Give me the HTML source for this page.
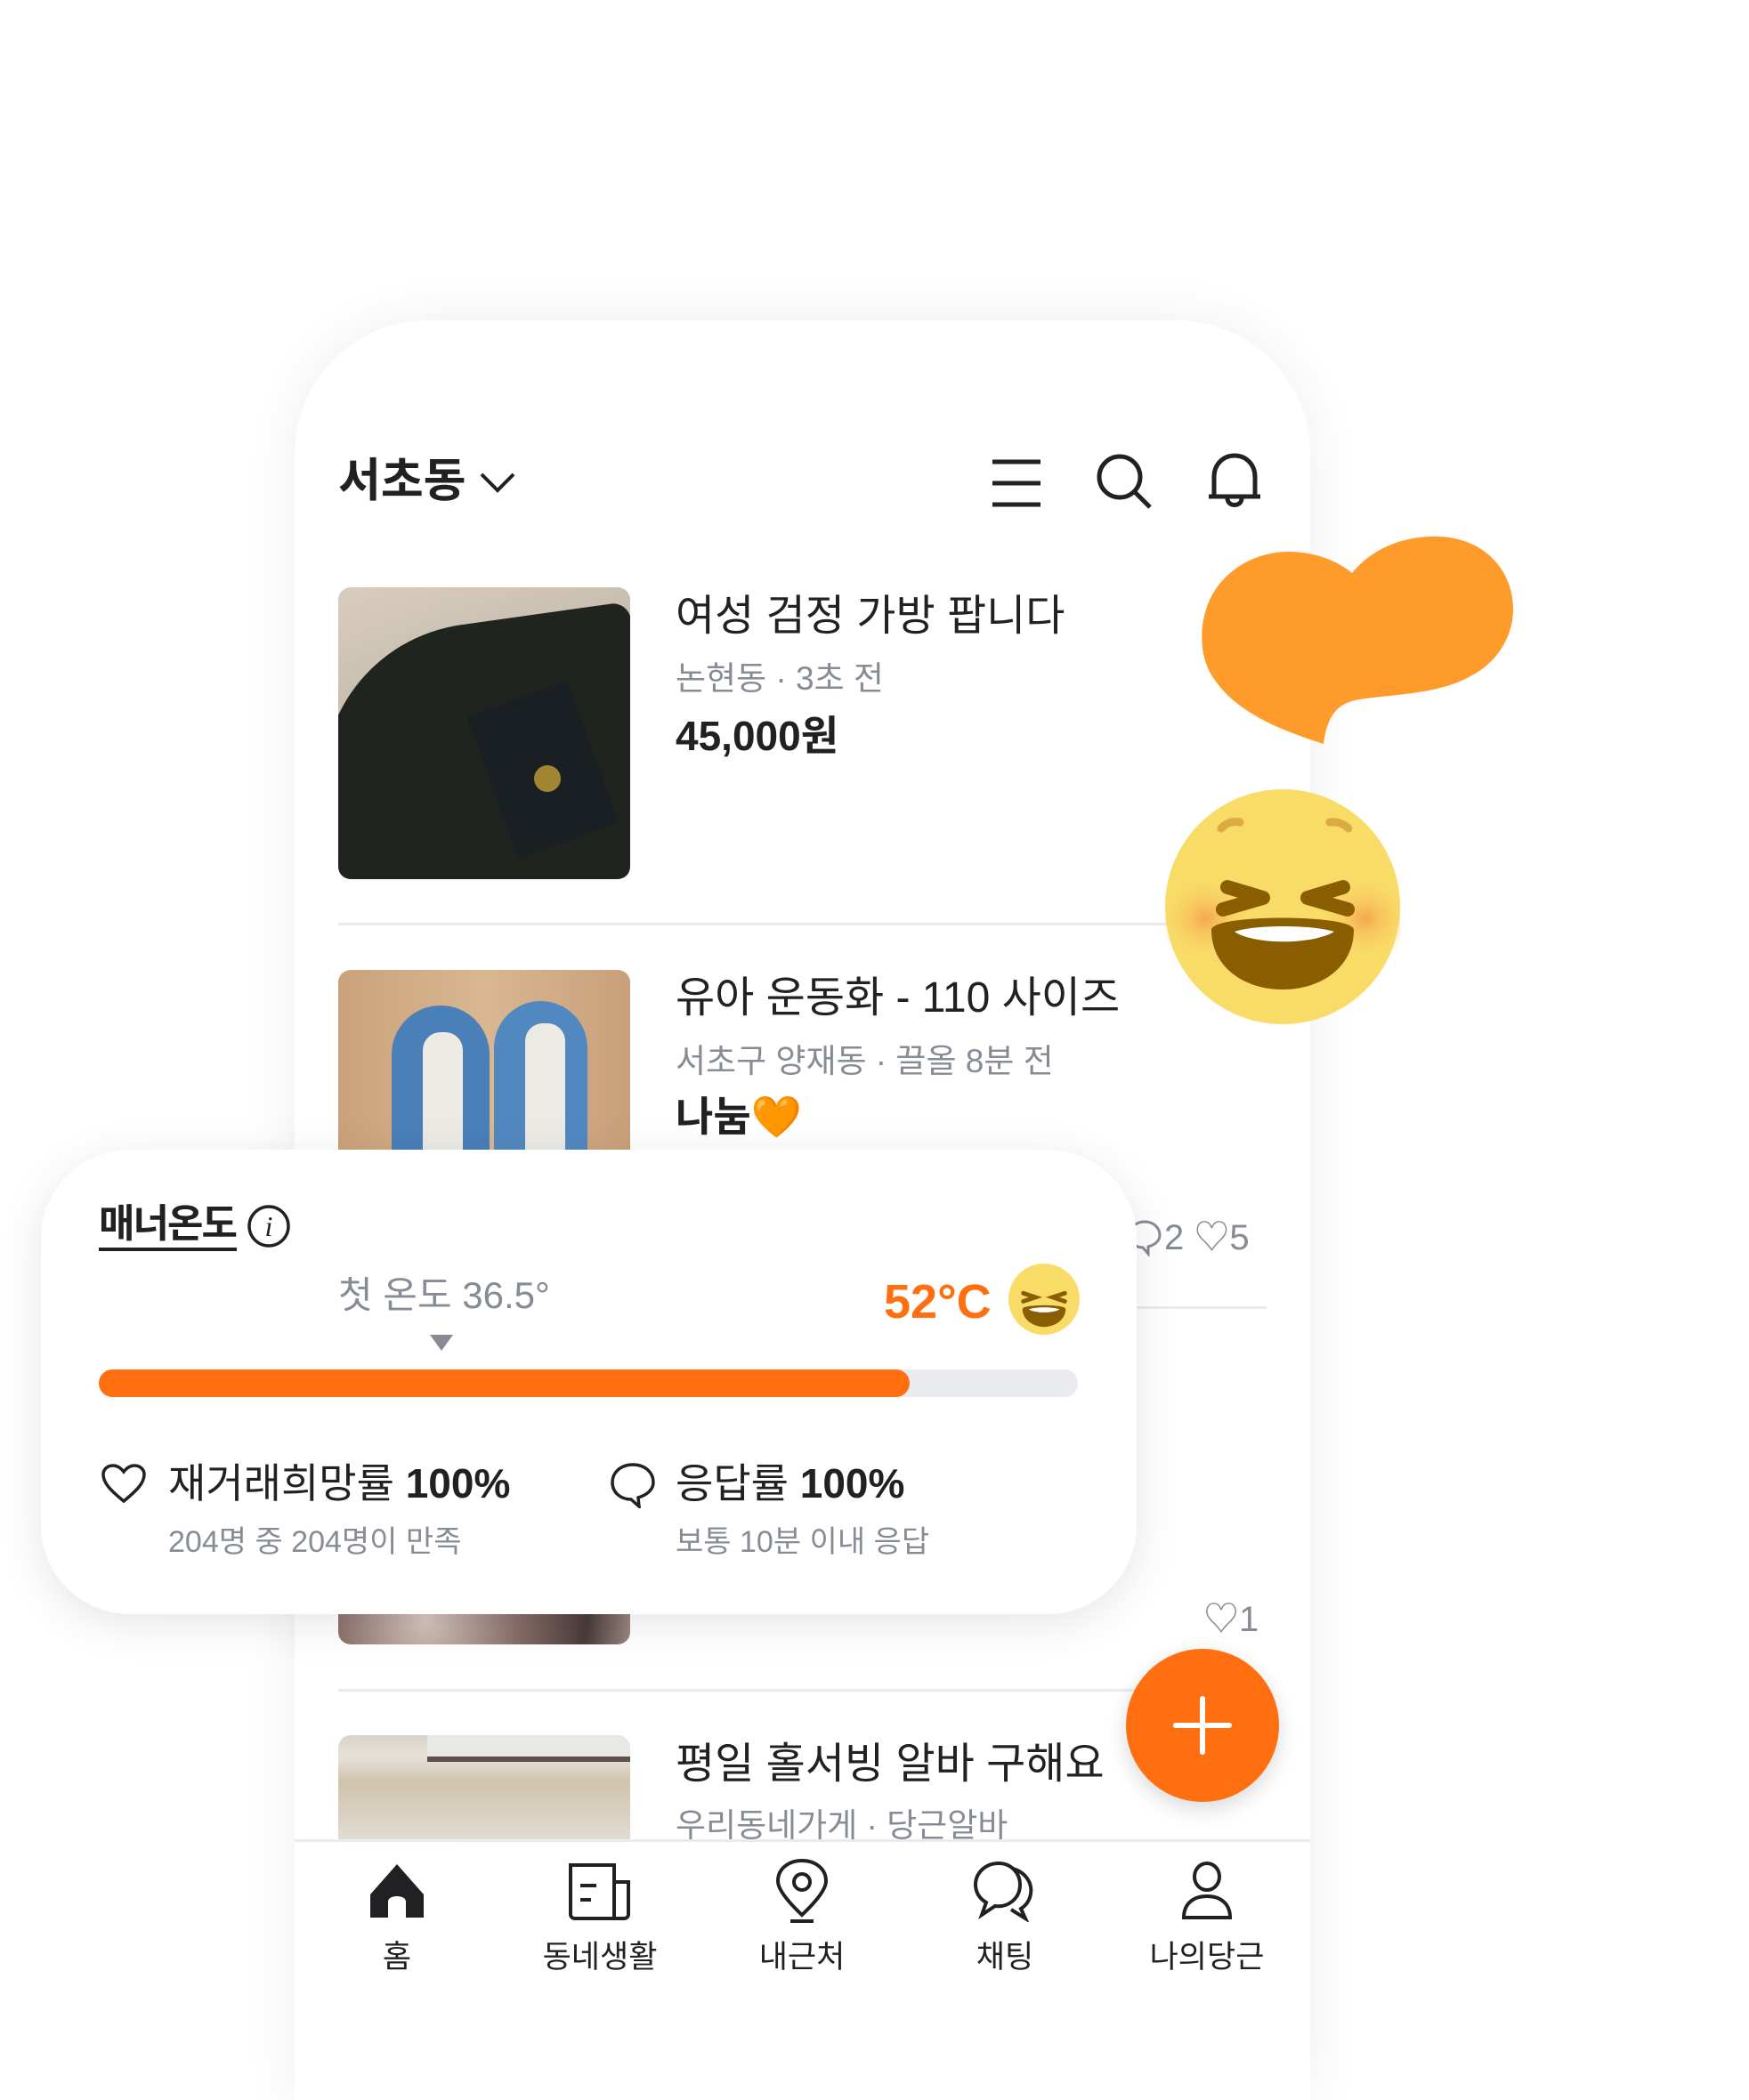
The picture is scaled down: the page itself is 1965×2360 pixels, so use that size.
<!DOCTYPE html>
<html><head><meta charset="utf-8"><style>
*{margin:0;padding:0;box-sizing:border-box}
body{width:1965px;height:2250px;background:#fff;position:relative;overflow:hidden;font-family:"Liberation Sans","Noto Sans CJK KR",sans-serif;color:#212124}
.a{position:absolute;white-space:nowrap;line-height:1}
.phone{position:absolute;left:331px;top:360px;width:1141px;height:2000px;background:#fff;border-radius:150px 150px 0 0;box-shadow:0 0 60px rgba(0,0,0,.07)}
.img{position:absolute;left:380px;width:328px;border-radius:14px;overflow:hidden}
.t{font-size:48px;left:759px}
.s{font-size:37px;color:#868b94;left:759px}
.div{position:absolute;left:380px;width:1043px;height:3px;background:#eaebee}
.card{position:absolute;left:46px;top:1292px;width:1231px;height:522px;background:#fff;border-radius:100px;box-shadow:0 10px 50px rgba(0,0,0,.10)}
.nl{font-size:35px;top:2182px;transform:translateX(-50%)}
</style></head><body>
<div class="phone"></div>
<!-- header -->
<div class="a" style="left:380px;top:515px;font-size:52px;font-weight:bold">서초동</div>
<svg class="a" style="left:538px;top:528px" width="42" height="28" viewBox="0 0 42 28"><path d="M3 5 L21 23 L39 5" fill="none" stroke="#212124" stroke-width="4"/></svg>
<svg class="a" style="left:1113px;top:515px" width="58" height="56" viewBox="0 0 58 56"><path d="M2 4H56M2 28H56M2 52H56" stroke="#212124" stroke-width="5"/></svg>
<svg class="a" style="left:1230px;top:508px" width="66" height="66" viewBox="0 0 66 66"><circle cx="28" cy="28" r="23" fill="none" stroke="#212124" stroke-width="5"/><path d="M44 44 L62 62" stroke="#212124" stroke-width="5"/></svg>
<svg class="a" style="left:1356px;top:508px" width="62" height="66" viewBox="0 0 62 66"><path d="M8 50 V28 C8 14 18 4 31 4 C44 4 54 14 54 28 V50 H8 Z M2 50 H60" fill="none" stroke="#212124" stroke-width="5" stroke-linejoin="round"/><path d="M23 52 C23 62 39 62 39 52" fill="none" stroke="#212124" stroke-width="5"/></svg>
<!-- item1 -->
<div class="img" style="top:660px;height:328px;background:linear-gradient(160deg,#d8cdbf 0%,#c9bfb0 30%,#ece6dc 100%)">
<div style="position:absolute;left:-20px;top:40px;width:370px;height:320px;background:#1f241f;border-radius:180px 20px 0 40px;transform:rotate(-8deg)"></div>
<div style="position:absolute;left:170px;top:120px;width:120px;height:170px;background:#1a1f24;transform:rotate(-20deg)"></div>
<div style="position:absolute;left:220px;top:200px;width:30px;height:30px;border-radius:50%;background:#a08533"></div>
</div>
<div class="a t" style="top:669px">여성 검정 가방 팝니다</div>
<div class="a s" style="top:744px">논현동 · 3초 전</div>
<div class="a" style="left:759px;top:804px;font-size:46px;font-weight:bold">45,000원</div>
<div class="div" style="top:1037px"></div>
<!-- item2 -->
<div class="img" style="top:1090px;height:230px;background:linear-gradient(90deg,#c9a27a,#d9b791,#c8a07a)">
<div style="position:absolute;left:60px;top:40px;width:110px;height:260px;background:#4a7fb8;border-radius:60px 60px 0 0"></div>
<div style="position:absolute;left:175px;top:35px;width:105px;height:260px;background:#5288c0;border-radius:60px 60px 0 0"></div>
<div style="position:absolute;left:95px;top:70px;width:45px;height:200px;background:#eceae4;border-radius:20px"></div>
<div style="position:absolute;left:210px;top:60px;width:45px;height:200px;background:#eceae4;border-radius:20px"></div>
</div>
<div class="a t" style="top:1098px">유아 운동화 - 110 사이즈</div>
<div class="a s" style="top:1174px">서초구 양재동 · 끌올 8분 전</div>
<div class="a" style="left:759px;top:1232px;font-size:46px;font-weight:bold">나눔<span style="color:#ff8a1f">🧡</span></div>
<svg class="a" style="left:1266px;top:1370px" width="40" height="42" viewBox="0 0 40 42"><path d="M20 3 C10 3 3 10 3 18 C3 26 10 32 18 32 L24 39 L24 31 C32 29 37 24 37 18 C37 10 30 3 20 3Z" fill="none" stroke="#868b94" stroke-width="3"/></svg>
<div class="a" style="left:1308px;top:1371px;font-size:40px;color:#868b94">2 ♡5</div>
<div class="div" style="top:1468px;left:1277px;width:146px"></div>
<!-- item3 -->
<div class="img" style="top:1700px;height:148px;background:radial-gradient(circle at 30% 80%,#d9c8c0,#8a6f6a 40%,#4a3c3a 70%,#c9b0a8)"></div>
<div class="a" style="left:1352px;top:1800px;font-size:40px;color:#868b94">♡1</div>
<div class="div" style="top:1898px"></div>
<!-- item4 -->
<div class="img" style="top:1950px;height:119px;border-radius:14px 14px 0 0;background:linear-gradient(180deg,#d8d3cb 0%,#e6e2da 20%,#cfc3ad 45%,#e2ddd3 100%)">
<div style="position:absolute;left:100px;top:0;width:250px;height:30px;background:#e8e8e6;border-bottom:6px solid #5a5048"></div>
</div>
<div class="a t" style="top:1959px">평일 홀서빙 알바 구해요</div>
<div class="a s" style="top:2033px">우리동네가게 · 당근알바</div>
<!-- nav -->
<div style="position:absolute;left:331px;top:2067px;width:1141px;height:200px;background:#fff;border-top:3px solid #eaebee"></div>
<svg class="a" style="left:414px;top:2093px" width="64" height="64" viewBox="0 0 64 64"><path d="M32 2 L62 36 V62 H42 V44 C42 36 22 36 22 44 V62 H2 V36 Z" fill="#212124"/></svg>
<svg class="a" style="left:638px;top:2093px" width="72" height="66" viewBox="0 0 72 66"><path d="M3 3 H52 V63 H8 C5 63 3 61 3 58 Z M52 22 H68 V58 C68 61 66 63 63 63 H52" fill="none" stroke="#212124" stroke-width="4"/><path d="M14 26 H32 M14 42 H26" stroke="#212124" stroke-width="4"/></svg>
<svg class="a" style="left:870px;top:2088px" width="62" height="74" viewBox="0 0 62 74"><path d="M31 64 C12 46 4 34 4 26 C4 12 16 3 31 3 C46 3 58 12 58 26 C58 34 50 46 31 64 Z" fill="none" stroke="#212124" stroke-width="4"/><circle cx="31" cy="27" r="9" fill="none" stroke="#212124" stroke-width="4"/><path d="M18 71 H44" stroke="#212124" stroke-width="4"/></svg>
<svg class="a" style="left:1092px;top:2090px" width="72" height="70" viewBox="0 0 72 70"><path d="M30 4 C15 4 4 15 4 28 C4 37 9 44 16 48 L11 62 L26 52 C40 54 54 44 54 28 C54 15 44 4 30 4 Z" fill="none" stroke="#212124" stroke-width="4"/><path d="M46 10 C60 14 68 26 66 38 C65 46 60 52 55 55 L60 66 L44 56" fill="none" stroke="#212124" stroke-width="4"/></svg>
<svg class="a" style="left:1325px;top:2091px" width="62" height="68" viewBox="0 0 62 68"><ellipse cx="31" cy="18" rx="14" ry="15" fill="none" stroke="#212124" stroke-width="4"/><path d="M5 64 C5 48 16 40 31 40 C46 40 57 48 57 64 Z" fill="none" stroke="#212124" stroke-width="4"/></svg>
<div class="a nl" style="left:446px">홈</div>
<div class="a nl" style="left:674px">동네생활</div>
<div class="a nl" style="left:901px">내근처</div>
<div class="a nl" style="left:1129px">채팅</div>
<div class="a nl" style="left:1356px">나의당근</div>
<!-- FAB -->
<div style="position:absolute;left:1265px;top:1853px;width:172px;height:172px;border-radius:50%;background:#ff6f0f;box-shadow:0 8px 24px rgba(0,0,0,.15)"></div>
<svg class="a" style="left:1317px;top:1905px" width="68" height="68" viewBox="0 0 68 68"><path d="M34 4V64M4 34H64" stroke="#fff" stroke-width="6" stroke-linecap="round"/></svg>
<!-- card -->
<div class="card"></div>
<div class="a" style="left:111px;top:1354px;font-size:44px;font-weight:bold;letter-spacing:-2px">매너온도</div>
<div style="position:absolute;left:111px;top:1402px;width:155px;height:4px;background:#212124"></div>
<svg class="a" style="left:277px;top:1353px" width="50" height="50" viewBox="0 0 50 50"><circle cx="25" cy="25" r="22" fill="none" stroke="#212124" stroke-width="3.5"/><text x="25" y="36" text-anchor="middle" font-family="Liberation Serif" font-style="italic" font-size="32" fill="#212124">i</text></svg>
<div class="a" style="left:380px;top:1435px;font-size:42px;color:#868b94">첫 온도 36.5°</div>
<svg class="a" style="left:483px;top:1500px" width="26" height="18" viewBox="0 0 26 18"><path d="M0 0H26L13 18Z" fill="#868b94"/></svg>
<div class="a" style="left:993px;top:1436px;font-size:54px;font-weight:bold;color:#ff6f0f">52°C</div>
<svg class="a" style="left:1133px;top:1420px" width="80" height="80" viewBox="0 0 264 264"><circle cx="132" cy="132" r="132" fill="#f9dc68"/><path d="M55 110 L100 125 L55 140 M209 110 L164 125 L209 140" fill="none" stroke="#8a5e00" stroke-width="16" stroke-linecap="round"/><path d="M52 168 C52 150 212 150 212 168 C212 210 170 235 132 235 C94 235 52 210 52 168Z" fill="#8a5e00"/><path d="M75 170 C100 185 165 185 190 170 C165 160 100 160 75 170Z" fill="#fff"/></svg>
<div style="position:absolute;left:111px;top:1539px;width:1100px;height:31px;border-radius:16px;background:#eaebee"></div>
<div style="position:absolute;left:111px;top:1539px;width:911px;height:31px;border-radius:16px;background:#ff6f0f"></div>
<svg class="a" style="left:113px;top:1644px" width="52" height="46" viewBox="0 0 52 46"><path d="M26 43 C10 30 3 22 3 13 C3 7 8 3 14 3 C19 3 23 6 26 10 C29 6 33 3 38 3 C44 3 49 7 49 13 C49 22 42 30 26 43Z" fill="none" stroke="#212124" stroke-width="3.5"/></svg>
<div class="a" style="left:189px;top:1644px;font-size:46px">재거래희망률 <b>100%</b></div>
<div class="a" style="left:189px;top:1716px;font-size:34px;color:#868b94">204명 중 204명이 만족</div>
<svg class="a" style="left:685px;top:1643px" width="52" height="52" viewBox="0 0 52 52"><path d="M26 3 C12 3 3 12 3 23 C3 34 12 42 24 42 L33 50 L32 40 C42 37 49 31 49 23 C49 12 40 3 26 3Z" fill="none" stroke="#212124" stroke-width="3.5"/></svg>
<div class="a" style="left:759px;top:1644px;font-size:46px">응답률 <b>100%</b></div>
<div class="a" style="left:759px;top:1716px;font-size:34px;color:#868b94">보통 10분 이내 응답</div>
<!-- big heart -->
<svg class="a" style="left:1347px;top:600px" width="355" height="240" viewBox="0 0 355 240"><path d="M172 44 C200 10 240 2 270 3 C320 5 353 40 353 85 C353 115 335 145 305 160 C270 180 220 180 180 186 C160 190 145 198 140 236 C90 220 40 200 15 160 C2 140 0 110 8 85 C20 45 60 20 100 20 C130 20 155 30 172 44Z" fill="#ff9b2a"/></svg>
<!-- big emoji -->
<svg class="a" style="left:1309px;top:887px" width="264" height="264" viewBox="0 0 264 264"><defs><radialGradient id="ch" cx=".5" cy=".5" r=".5"><stop offset="0" stop-color="#f5a850"/><stop offset="1" stop-color="#f9dc68" stop-opacity="0"/></radialGradient></defs><circle cx="132" cy="132" r="132" fill="#f9dc68"/><ellipse cx="45" cy="145" rx="55" ry="50" fill="url(#ch)"/><ellipse cx="225" cy="145" rx="55" ry="50" fill="url(#ch)"/><path d="M63 44 C70 36 78 36 84 37 M185 37 C192 36 200 38 206 44" fill="none" stroke="#dcaa45" stroke-width="9" stroke-linecap="round"/><path d="M70 110 L110 122 L65 135 M200 110 L160 122 L205 135" fill="none" stroke="#8a5e00" stroke-width="16" stroke-linecap="round" stroke-linejoin="round"/><path d="M52 158 C52 140 212 140 212 158 C212 200 175 225 132 225 C89 225 52 200 52 158Z" fill="#8a5e00"/><path d="M78 160 C100 175 165 175 190 160 C165 152 100 152 78 160Z" fill="#fff"/></svg>
</body></html>
